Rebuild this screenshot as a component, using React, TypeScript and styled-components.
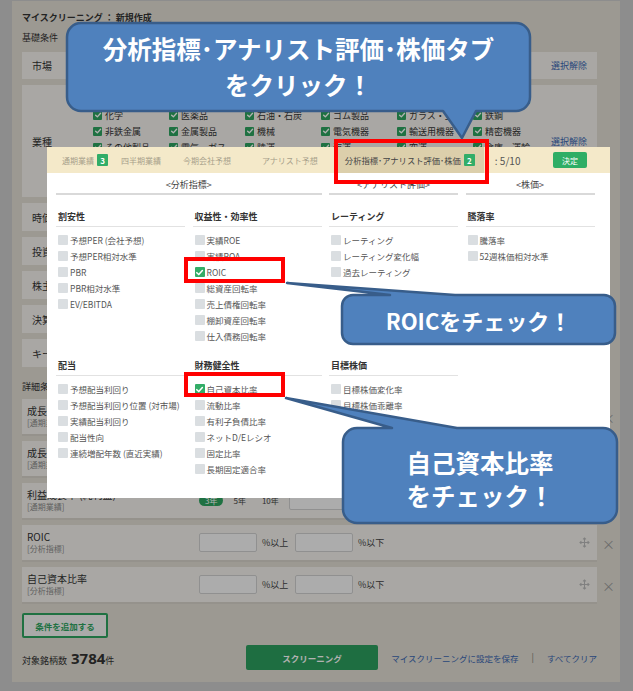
import React from 'react'
import styled, { createGlobalStyle } from 'styled-components'

const GlobalStyle = createGlobalStyle`
  html, body {
    margin: 0;
    padding: 0;
  }
  body {
    background: #cbcbcb;
    font-family: 'Noto Sans CJK JP', 'Noto Sans', sans-serif;
  }
`

const industries = [
  ['水産・農林', '鉱業', '建設業', '食料品', '繊維製品', 'パルプ・紙'],
  ['化学', '医薬品', '石油・石炭', 'ゴム製品', 'ガラス・土石', '鉄鋼'],
  ['非鉄金属', '金属製品', '機械', '電気機器', '輸送用機器', '精密機器'],
  ['その他製品', '電気・ガス', '陸運', '海運', '空運', '倉庫・運輸'],
  ['情報・通信', '卸売業', '小売業', '銀行業', '証券業', '保険業'],
  ['その他金融', '不動産業', 'サービス業'],
].flat()

const basicRows = ['時価総額', '投資金額', '株主優待', '決算発表日', 'キーワード']

interface Indicator {
  label: string
  checked?: boolean
}

interface Category {
  title: string
  items: Indicator[]
}

const sectionOne: Category[] = [
  {
    title: '割安性',
    items: [
      { label: '予想PER (会社予想)' },
      { label: '予想PER相対水準' },
      { label: 'PBR' },
      { label: 'PBR相対水準' },
      { label: 'EV/EBITDA' },
    ],
  },
  {
    title: '収益性・効率性',
    items: [
      { label: '実績ROE' },
      { label: '実績ROA' },
      { label: 'ROIC', checked: true },
      { label: '総資産回転率' },
      { label: '売上債権回転率' },
      { label: '棚卸資産回転率' },
      { label: '仕入債務回転率' },
    ],
  },
  {
    title: 'レーティング',
    items: [
      { label: 'レーティング' },
      { label: 'レーティング変化幅' },
      { label: '過去レーティング' },
    ],
  },
  {
    title: '騰落率',
    items: [{ label: '騰落率' }, { label: '52週株価相対水準' }],
  },
]

const sectionTwo: Category[] = [
  {
    title: '配当',
    items: [
      { label: '予想配当利回り' },
      { label: '予想配当利回り位置 (対市場)' },
      { label: '実績配当利回り' },
      { label: '配当性向' },
      { label: '連続増配年数 (直近実績)' },
    ],
  },
  {
    title: '財務健全性',
    items: [
      { label: '自己資本比率', checked: true },
      { label: '流動比率' },
      { label: '有利子負債比率' },
      { label: 'ネットD/Eレシオ' },
      { label: '固定比率' },
      { label: '長期固定適合率' },
    ],
  },
  {
    title: '目標株価',
    items: [{ label: '目標株価変化率' }, { label: '目標株価乖離率' }],
  },
]

const detailRows = [
  { title: '成長率 (売上高)', sub: '[通期業績]', years: true },
  { title: '成長率 (営業利益)', sub: '[通期業績]', years: true },
  { title: '利益成長率 (純利益)', sub: '[通期業績]', years: true },
  { title: 'ROIC', sub: '[分析指標]', years: false },
  { title: '自己資本比率', sub: '[分析指標]', years: false },
]

/* ---------- page behind the modal ---------- */

const Screen = styled.div`
  position: relative;
  width: 633px;
  height: 691px;
  overflow: hidden;
  background: #cbcbcb;
`

const Page = styled.div`
  box-sizing: border-box;
  width: 608px;
  height: 681px;
  margin: 1px 0 0 12px;
  padding: 10px 23px 0 10px;
  background: #e0dcd2;
  color: #333;
  font-size: 9px;
`

const Title = styled.div`
  font-weight: 700;
  line-height: 14px;
`

const SectionLabel = styled.div<{ $mt: number }>`
  margin-top: ${p => p.$mt}px;
  line-height: 14px;
`

const BasicList = styled.div`
  display: flex;
  flex-direction: column;
  gap: 6px;
  margin-top: 7px;
`

const BasicPanel = styled.div<{ $h: number }>`
  box-sizing: border-box;
  display: flex;
  align-items: center;
  height: ${p => p.$h}px;
  padding: 0 10px;
  background: #f2f0eb;
`

const PanelLabel = styled.div`
  width: 61px;
  flex: none;
  font-size: 10px;
  white-space: nowrap;
`

const ClearLink = styled.span`
  margin-left: auto;
  color: #3a66b0;
  font-size: 9px;
`

const IndustryGrid = styled.div`
  align-self: flex-start;
  display: grid;
  grid-template-columns: repeat(6, 76px);
  grid-auto-rows: 16px;
  margin-top: 6px;
`

const IndustryItem = styled.div`
  display: flex;
  align-items: center;
  gap: 3px;
  font-size: 9px;
  white-space: nowrap;
`

const GreenBox = styled.span<{ $size: number }>`
  display: inline-flex;
  align-items: center;
  justify-content: center;
  width: ${p => p.$size}px;
  height: ${p => p.$size}px;
  flex: none;
  border-radius: 1px;
  background: #2da35f;
`

const DetailList = styled.div`
  display: flex;
  flex-direction: column;
  gap: 5px;
  margin: 5px -23px 0 0;
`

const DetailRow = styled.div`
  display: flex;
  align-items: center;
`

const DetailPanel = styled.div`
  box-sizing: border-box;
  flex: 1;
  display: flex;
  align-items: center;
  height: 37px;
  padding: 0 7px 0 5px;
  background: #f2f0eb;
  border-bottom: 2px solid #d6d2c9;
`

const RowLabel = styled.div`
  width: 172px;
  flex: none;
  display: flex;
  flex-direction: column;
`

const RowTitle = styled.span`
  font-size: 10px;
  line-height: 13px;
  white-space: nowrap;
`

const RowSub = styled.span`
  font-size: 8px;
  line-height: 12px;
  color: #8a8a8a;
`

const YearPill = styled.span<{ $on?: boolean }>`
  display: inline-flex;
  align-items: center;
  justify-content: center;
  height: 11px;
  padding: 0 6px;
  margin-right: 4px;
  border-radius: 6px;
  font-size: 8px;
  background: ${p => (p.$on ? '#2da35f' : 'transparent')};
  color: ${p => (p.$on ? '#fff' : '#444')};
`

const RangeInput = styled.span`
  box-sizing: border-box;
  width: 58px;
  height: 19px;
  border: 1px solid #cfcfcf;
  border-radius: 2px;
  background: #f7f7f7;
`

const Unit = styled.span`
  width: 38px;
  padding-left: 5px;
  box-sizing: border-box;
  font-size: 9px;
  color: #444;
`

const MoveHandle = styled.span`
  margin-left: auto;
  display: flex;
`

const CloseMark = styled.span`
  width: 23px;
  text-align: center;
  font-size: 13px;
  color: #9a9a9a;
`

const AddButton = styled.div`
  box-sizing: border-box;
  display: flex;
  align-items: center;
  justify-content: center;
  width: 86px;
  height: 25px;
  margin-top: 9px;
  border: 2px solid #2da35f;
  border-radius: 2px;
  background: #f4f4f2;
  color: #2da35f;
  font-weight: 700;
  font-size: 8.5px;
`

const Footer = styled.div`
  display: flex;
  align-items: center;
  height: 25px;
  margin-top: 7px;
`

const Count = styled.div`
  width: 224px;
  flex: none;
  display: flex;
  align-items: baseline;
  font-size: 9px;
  white-space: nowrap;
`

const CountNumber = styled.span`
  margin-left: 4px;
  font-size: 15px;
  font-weight: 700;
  font-family: 'Open Sans', 'Noto Sans', sans-serif;
`

const ScreenButton = styled.div`
  display: flex;
  align-items: center;
  justify-content: center;
  width: 135px;
  height: 25px;
  margin-right: 13px;
  border-radius: 2px;
  background: #2b9e5d;
  color: #fff;
  font-weight: 700;
  font-size: 8.5px;
`

const FooterLink = styled.span`
  color: #3a66b0;
  font-size: 8.5px;
  white-space: nowrap;
`

const Separator = styled.span`
  margin: 0 13px;
  color: #777;
  font-size: 9px;
`

/* ---------- modal ---------- */

const Backdrop = styled.div`
  position: absolute;
  inset: 0;
  background: rgba(0, 0, 0, 0.3);
`

const Dialog = styled.div`
  position: absolute;
  left: 47px;
  top: 147px;
  width: 563px;
  height: 351px;
  background: #fff;
  color: #333;
`

const TabBar = styled.div`
  display: flex;
  align-items: stretch;
  height: 26px;
  background: #f4e9c9;
  font-size: 8px;
`

const Tab = styled.div<{ $ml: number }>`
  display: flex;
  align-items: center;
  margin-left: ${p => p.$ml}px;
  color: #a7a08a;
  white-space: nowrap;
`

const ActiveTab = styled.div`
  box-sizing: border-box;
  display: flex;
  align-items: center;
  width: 148px;
  margin-left: 18px;
  padding-left: 9px;
  background: #dccfab;
  color: #444;
  font-size: 8.3px;
  white-space: nowrap;
`

const Badge = styled.span`
  display: inline-flex;
  align-items: center;
  justify-content: center;
  width: 11px;
  height: 12px;
  margin-left: 3px;
  border-radius: 1px;
  background: #31ad68;
  color: #fff;
  font-size: 8px;
  font-weight: 700;
`

const Progress = styled.div`
  display: flex;
  align-items: center;
  margin-left: 11px;
  font-size: 10px;
  color: #555;
`

const DecideButton = styled.div`
  align-self: center;
  display: flex;
  align-items: center;
  justify-content: center;
  width: 34px;
  height: 16px;
  margin: 0 23px 0 auto;
  border-radius: 2px;
  background: #2fae65;
  color: #fff;
  font-size: 8px;
`

const Content = styled.div`
  display: grid;
  grid-template-columns: repeat(4, 129px);
  column-gap: 7.5px;
  row-gap: 3px;
  padding-left: 9px;
`

const GroupHead = styled.div<{ $span: number }>`
  grid-column: span ${p => p.$span};
  padding: 6px 0 2px;
  line-height: 12px;
  text-align: center;
  font-size: 9px;
  color: #444;
  border-bottom: 2px solid #d9d9d9;
`

const CategoryBlock = styled.div`
  display: flex;
  flex-direction: column;
`

const CategoryTitle = styled.div`
  padding: 13px 0 3px 2px;
  line-height: 12px;
  font-size: 9px;
  font-weight: 700;
  border-bottom: 1px solid #e2e2e2;
`

const ItemList = styled.div`
  display: flex;
  flex-direction: column;
  padding: 5px 0 0 2px;
`

const Item = styled.div`
  display: flex;
  align-items: center;
  gap: 2px;
  height: 16px;
  font-size: 8.5px;
  color: #555;
  white-space: nowrap;
`

const Box = styled.span<{ $checked?: boolean }>`
  display: inline-flex;
  align-items: center;
  justify-content: center;
  width: 10px;
  height: 10px;
  flex: none;
  border-radius: 1px;
  background: ${p => (p.$checked ? '#33ad67' : '#dadee1')};
`

/* ---------- annotations ---------- */

const Highlight = styled.div<{ $x: number; $y: number; $w: number; $h: number }>`
  position: absolute;
  box-sizing: border-box;
  left: ${p => p.$x}px;
  top: ${p => p.$y}px;
  width: ${p => p.$w}px;
  height: ${p => p.$h}px;
  border: 4px solid #ff0000;
`

const BubbleLayer = styled.svg`
  position: absolute;
  left: 0;
  top: 0;
`

const BubbleText = styled.div<{ $x: number; $y: number; $w: number; $h: number; $size: number; $lh: number; $pt?: number }>`
  position: absolute;
  box-sizing: border-box;
  left: ${p => p.$x}px;
  top: ${p => p.$y}px;
  width: ${p => p.$w}px;
  height: ${p => p.$h}px;
  padding-top: ${p => p.$pt || 0}px;
  display: flex;
  flex-direction: column;
  align-items: center;
  justify-content: center;
  color: #fff;
  font-weight: 700;
  font-size: ${p => p.$size}px;
  line-height: ${p => p.$lh}px;
  white-space: nowrap;
`

interface Tail {
  edge: 'top' | 'bottom'
  a: number
  b: number
  tx: number
  ty: number
}

function bubblePath(x0: number, y0: number, x1: number, y1: number, r: number, t: Tail) {
  const top = t.edge === 'top' ? `L${t.a} ${y0} L${t.tx} ${t.ty} L${t.b} ${y0} ` : ''
  const bottom = t.edge === 'bottom' ? `L${t.b} ${y1} L${t.tx} ${t.ty} L${t.a} ${y1} ` : ''
  return (
    `M${x0 + r} ${y0} ${top}L${x1 - r} ${y0} A${r} ${r} 0 0 1 ${x1} ${y0 + r} ` +
    `L${x1} ${y1 - r} A${r} ${r} 0 0 1 ${x1 - r} ${y1} ${bottom}` +
    `L${x0 + r} ${y1} A${r} ${r} 0 0 1 ${x0} ${y1 - r} L${x0} ${y0 + r} A${r} ${r} 0 0 1 ${x0 + r} ${y0} Z`
  )
}

const Check = ({ size }: { size: number }) => (
  <svg width={size} height={size} viewBox="0 0 10 10">
    <path d="M2 5.2 4.2 7.3 8.2 2.8" fill="none" stroke="#fff" strokeWidth="1.7" strokeLinecap="round" strokeLinejoin="round" />
  </svg>
)

const MoveIcon = () => (
  <svg width="11" height="11" viewBox="0 0 12 12" fill="none" stroke="#b8b8b8" strokeWidth="1.1">
    <path d="M6 1v10M1 6h10M4.4 2.6 6 1l1.6 1.6M4.4 9.4 6 11l1.6-1.6M2.6 4.4 1 6l1.6 1.6M9.4 4.4 11 6 9.4 7.6" />
  </svg>
)

const CategoryView = ({ cat }: { cat: Category }) => (
  <CategoryBlock>
    <CategoryTitle>{cat.title}</CategoryTitle>
    <ItemList>
      {cat.items.map(it => (
        <Item key={it.label}>
          <Box $checked={it.checked}>{it.checked && <Check size={9} />}</Box>
          {it.label}
        </Item>
      ))}
    </ItemList>
  </CategoryBlock>
)

export default function App() {
  return (
    <Screen>
      <GlobalStyle />
      <Page>
        <Title>マイスクリーニング ： 新規作成</Title>
        <SectionLabel $mt={6}>基礎条件</SectionLabel>
        <BasicList>
          <BasicPanel $h={27}>
            <PanelLabel>市場</PanelLabel>
            <ClearLink>選択解除</ClearLink>
          </BasicPanel>
          <BasicPanel $h={112}>
            <PanelLabel>業種</PanelLabel>
            <IndustryGrid>
              {industries.map(name => (
                <IndustryItem key={name}>
                  <GreenBox $size={9}>
                    <Check size={8} />
                  </GreenBox>
                  {name}
                </IndustryItem>
              ))}
            </IndustryGrid>
            <ClearLink>選択解除</ClearLink>
          </BasicPanel>
          {basicRows.map(name => (
            <BasicPanel key={name} $h={28}>
              <PanelLabel>{name}</PanelLabel>
            </BasicPanel>
          ))}
        </BasicList>

        <SectionLabel $mt={13}>詳細条件</SectionLabel>
        <DetailList>
          {detailRows.map(row => (
            <DetailRow key={row.title}>
              <DetailPanel>
                <RowLabel>
                  <RowTitle>{row.title}</RowTitle>
                  <RowSub>{row.sub}</RowSub>
                </RowLabel>
                {row.years && (
                  <>
                    <YearPill $on>3年</YearPill>
                    <YearPill>5年</YearPill>
                    <YearPill>10年</YearPill>
                  </>
                )}
                <RangeInput />
                <Unit>%以上</Unit>
                <RangeInput />
                <Unit>%以下</Unit>
                <MoveHandle>
                  <MoveIcon />
                </MoveHandle>
              </DetailPanel>
              <CloseMark>×</CloseMark>
            </DetailRow>
          ))}
        </DetailList>

        <AddButton>条件を追加する</AddButton>

        <Footer>
          <Count>
            対象銘柄数<CountNumber>3784</CountNumber>件
          </Count>
          <ScreenButton>スクリーニング</ScreenButton>
          <FooterLink>マイスクリーニングに設定を保存</FooterLink>
          <Separator>|</Separator>
          <FooterLink>すべてクリア</FooterLink>
        </Footer>
      </Page>

      <Backdrop />

      <Dialog>
        <TabBar>
          <Tab $ml={15}>
            通期業績<Badge>3</Badge>
          </Tab>
          <Tab $ml={13}>四半期業績</Tab>
          <Tab $ml={22}>今期会社予想</Tab>
          <Tab $ml={31}>アナリスト予想</Tab>
          <ActiveTab>
            分析指標･アナリスト評価･株価<Badge>2</Badge>
          </ActiveTab>
          <Progress>: 5/10</Progress>
          <DecideButton>決定</DecideButton>
        </TabBar>
        <Content>
          <GroupHead $span={2}>&lt;分析指標&gt;</GroupHead>
          <GroupHead $span={1}>&lt;アナリスト評価&gt;</GroupHead>
          <GroupHead $span={1}>&lt;株価&gt;</GroupHead>
          {sectionOne.map(c => (
            <CategoryView key={c.title} cat={c} />
          ))}
          {sectionTwo.map(c => (
            <CategoryView key={c.title} cat={c} />
          ))}
        </Content>
      </Dialog>

      <Highlight $x={334} $y={139} $w={155} $h={45} />
      <Highlight $x={184} $y={257} $w={101} $h={26} />
      <Highlight $x={184} $y={372} $w={101} $h={25} />

      <BubbleLayer width={633} height={691}>
        <g fill="#4f81bd" stroke="#385d8a" strokeWidth="2.5" strokeLinejoin="round">
          <path d={bubblePath(67, 23, 530, 111, 14, { edge: 'bottom', a: 443, b: 476, tx: 462, ty: 138 })} />
          <path d={bubblePath(342, 295, 615, 344, 11, { edge: 'top', a: 390, b: 455, tx: 287, ty: 283 })} />
          <path d={bubblePath(343, 428, 617, 523, 14, { edge: 'top', a: 392, b: 457, tx: 286, ty: 398 })} />
        </g>
      </BubbleLayer>

      <BubbleText $x={67} $y={23} $w={463} $h={88} $size={24.5} $lh={36}>
        <span>分析指標･アナリスト評価･株価タブ</span>
        <span>をクリック！</span>
      </BubbleText>
      <BubbleText $x={342} $y={295} $w={273} $h={49} $size={22} $lh={30}>
        <span>ROICをチェック！</span>
      </BubbleText>
      <BubbleText $x={343} $y={428} $w={274} $h={95} $size={24.5} $lh={33} $pt={6}>
        <span>自己資本比率</span>
        <span>をチェック！</span>
      </BubbleText>
    </Screen>
  )
}
